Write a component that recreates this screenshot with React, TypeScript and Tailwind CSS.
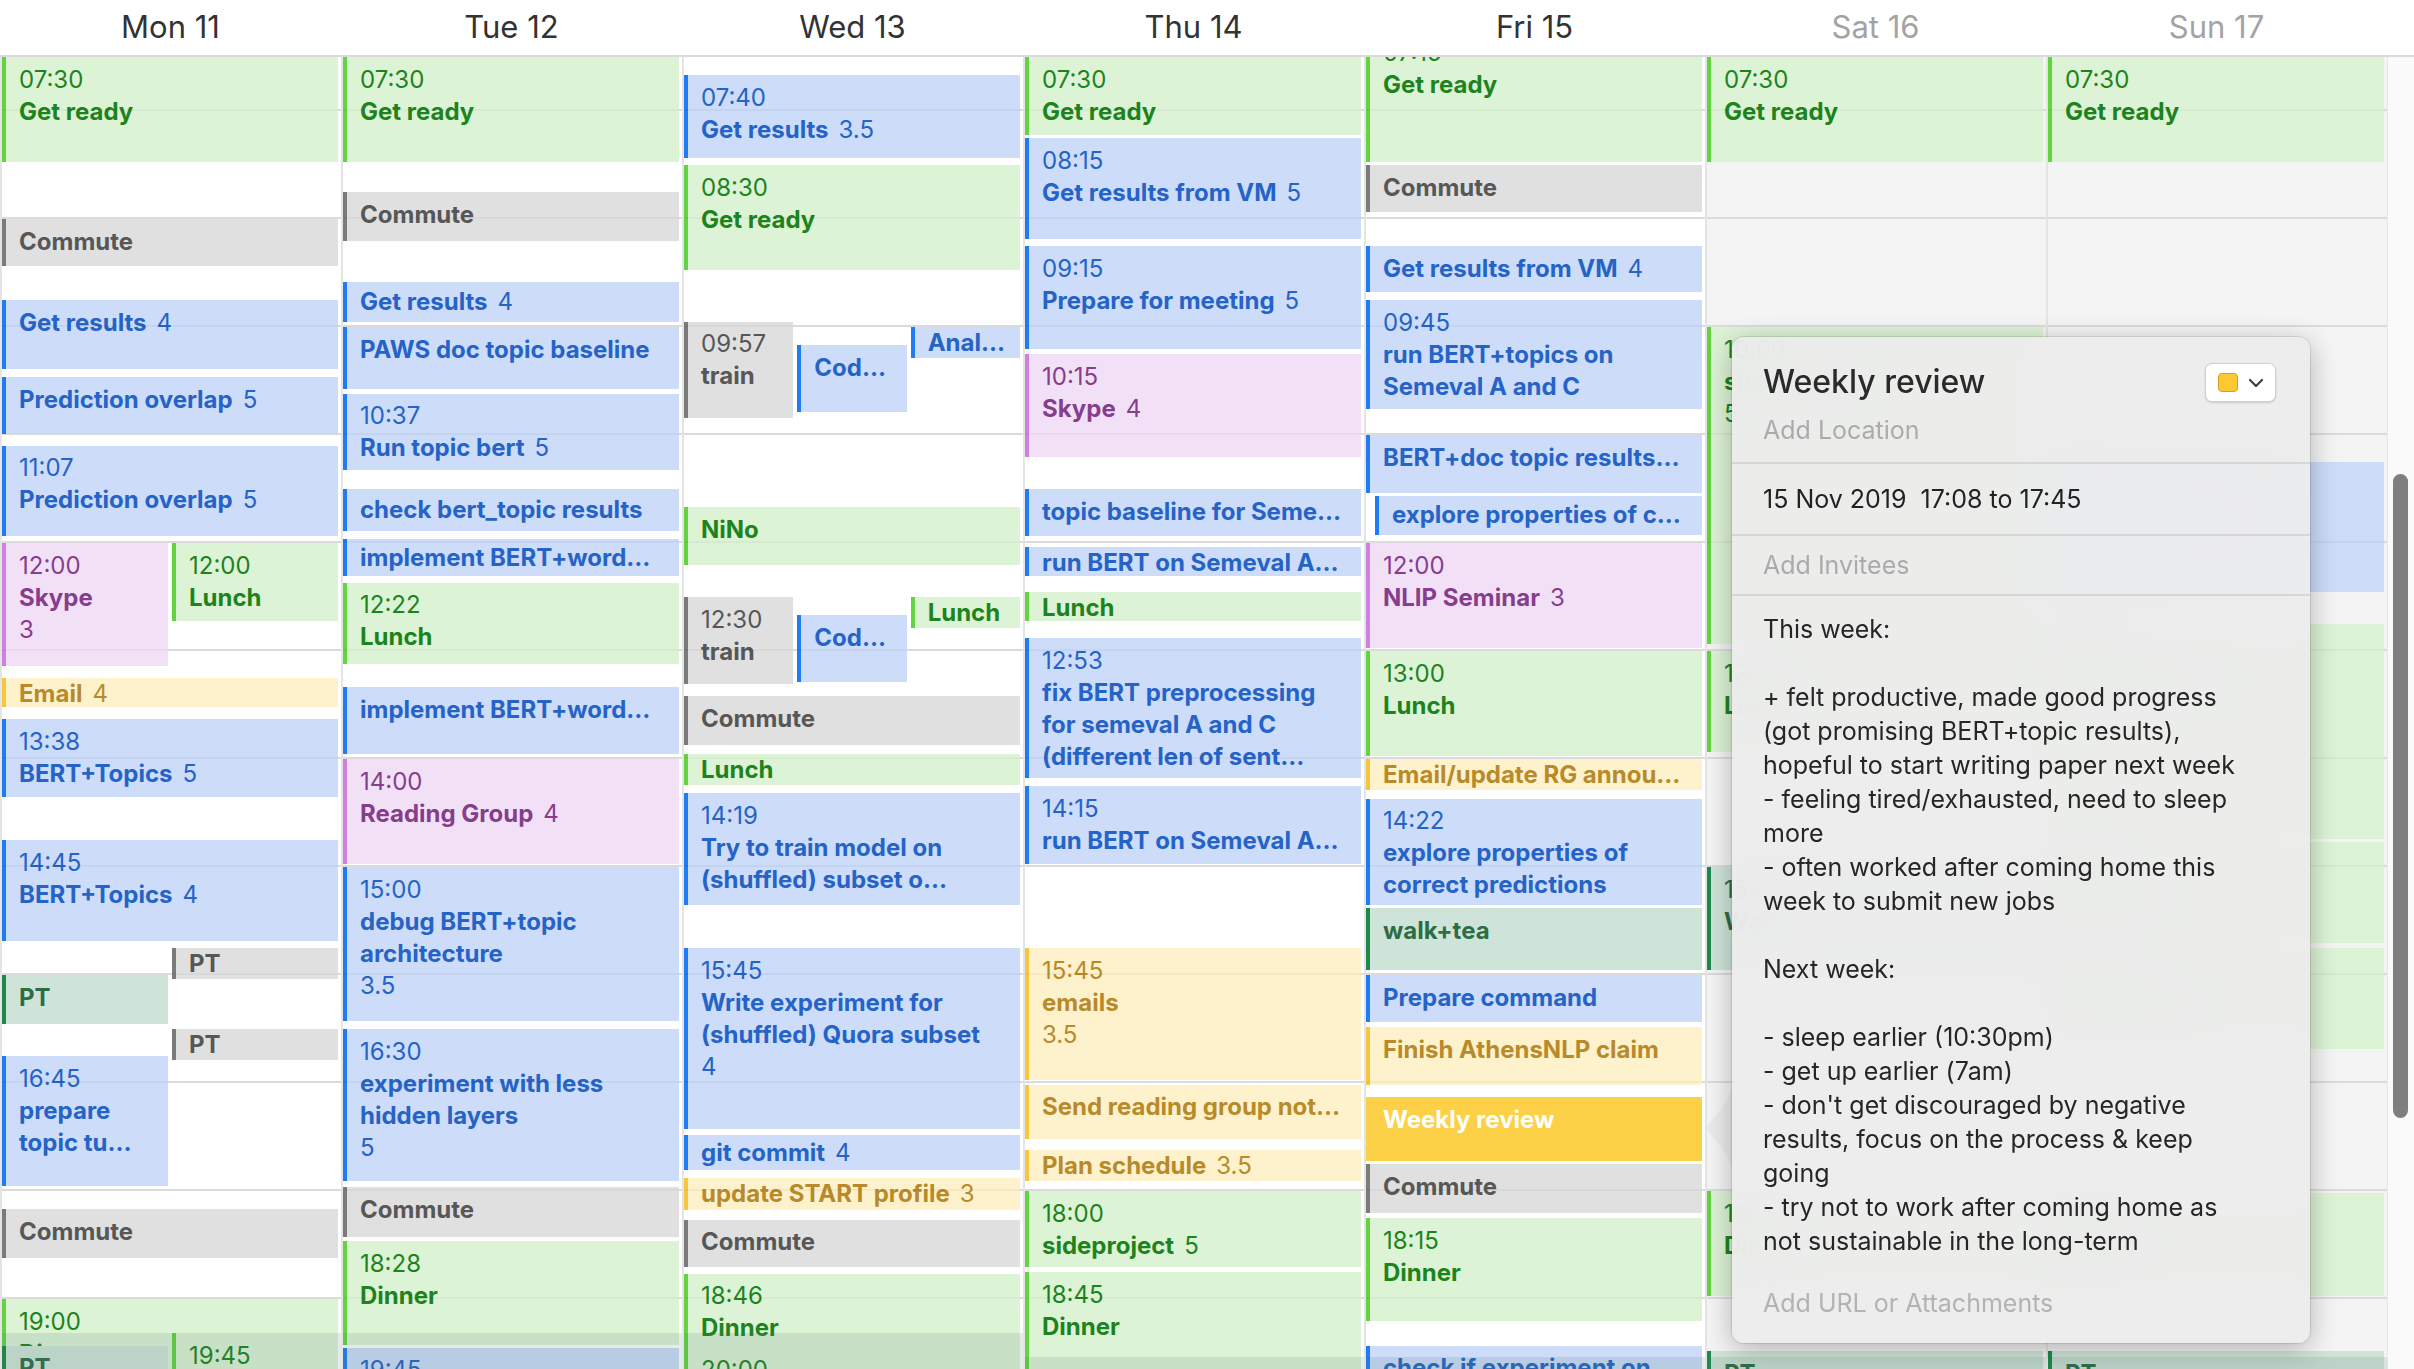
import { ChevronDown } from "lucide-react";

type Kind = "green" | "blue" | "gray" | "purple" | "yellow" | "teal" | "selected";

const kinds: Record<Kind, string> = {
  green: "bg-[#ddf3d6] border-[#62d43f] text-[#1d841d]",
  blue: "bg-[#ccdcf9] border-[#1f7cf5] text-[#2563c7]",
  gray: "bg-[#e0e0e0] border-[#7b7b7b] text-[#575757]",
  purple: "bg-[#f2e1f6] border-[#cf80e0] text-[#863d8d]",
  yellow: "bg-[#fdf2cc] border-[#f8c63c] text-[#b98a2a]",
  teal: "bg-[#cfe4d8] border-[#1b8a4b] text-[#2d6d46]",
  selected: "bg-[#fdd147] border-[#fdd147] text-white",
};

type Ev = {
  s: string;
  e: string;
  k: Kind;
  time?: string;
  lines: string[];
  num?: string;
  numLine?: boolean;
  part?: [number, number];
  indent?: number;
};

type Day = { label: string; weekend?: boolean; band: number; events: Ev[] };

const days: Day[] = [
  {
    label: "Mon 11",
    band: 1276,
    events: [
      { s: "07:30", e: "08:30", k: "green", time: "07:30", lines: ["Get ready"] },
      { s: "09:00", e: "09:28", k: "gray", lines: ["Commute"] },
      { s: "09:45", e: "10:25", k: "blue", lines: ["Get results"], num: "4" },
      { s: "10:28", e: "11:01", k: "blue", lines: ["Prediction overlap"], num: "5" },
      { s: "11:06", e: "11:58", k: "blue", time: "11:07", lines: ["Prediction overlap"], num: "5" },
      { s: "12:00", e: "13:10", k: "purple", time: "12:00", lines: ["Skype"], num: "3", numLine: true, part: [0, 2] },
      { s: "12:00", e: "12:45", k: "green", time: "12:00", lines: ["Lunch"], part: [1, 2] },
      { s: "13:15", e: "13:33", k: "yellow", lines: ["Email"], num: "4" },
      { s: "13:38", e: "14:23", k: "blue", time: "13:38", lines: ["BERT+Topics"], num: "5" },
      { s: "14:45", e: "15:43", k: "blue", time: "14:45", lines: ["BERT+Topics"], num: "4" },
      { s: "15:45", e: "16:04", k: "gray", lines: ["PT"], part: [1, 2] },
      { s: "16:00", e: "16:29", k: "teal", lines: ["PT"], part: [0, 2] },
      { s: "16:30", e: "16:49", k: "gray", lines: ["PT"], part: [1, 2] },
      { s: "16:45", e: "17:59", k: "blue", time: "16:45", lines: ["prepare", "topic tu…"], part: [0, 2] },
      { s: "18:10", e: "18:39", k: "gray", lines: ["Commute"] },
      { s: "19:00", e: "20:30", k: "green", time: "19:00", lines: ["Dinner"] },
      { s: "19:19", e: "20:30", k: "green", time: "19:45", lines: ["Dinner"], part: [1, 2] },
      { s: "19:26", e: "20:30", k: "teal", lines: ["PT"], part: [0, 2] },
    ],
  },
  {
    label: "Tue 12",
    band: 1276,
    events: [
      { s: "07:30", e: "08:30", k: "green", time: "07:30", lines: ["Get ready"] },
      { s: "08:45", e: "09:14", k: "gray", lines: ["Commute"] },
      { s: "09:35", e: "09:59", k: "blue", lines: ["Get results"], num: "4" },
      { s: "10:00", e: "10:36", k: "blue", lines: ["PAWS doc topic baseline"] },
      { s: "10:37", e: "11:21", k: "blue", time: "10:37", lines: ["Run topic bert"], num: "5" },
      { s: "11:30", e: "11:55", k: "blue", lines: ["check bert_topic results"] },
      { s: "11:58", e: "12:20", k: "blue", lines: ["implement BERT+word…"] },
      { s: "12:22", e: "13:09", k: "green", time: "12:22", lines: ["Lunch"] },
      { s: "13:20", e: "13:59", k: "blue", lines: ["implement BERT+word…"] },
      { s: "14:00", e: "15:00", k: "purple", time: "14:00", lines: ["Reading Group"], num: "4" },
      { s: "15:00", e: "16:27", k: "blue", time: "15:00", lines: ["debug BERT+topic", "architecture"], num: "3.5", numLine: true },
      { s: "16:30", e: "17:56", k: "blue", time: "16:30", lines: ["experiment with less", "hidden layers"], num: "5", numLine: true },
      { s: "17:58", e: "18:27", k: "gray", lines: ["Commute"] },
      { s: "18:28", e: "19:27", k: "green", time: "18:28", lines: ["Dinner"] },
      { s: "19:27", e: "20:30", k: "blue", time: "19:45", lines: ["Get results from VM"], num: "4" },
    ],
  },
  {
    label: "Wed 13",
    band: 1276,
    events: [
      { s: "07:40", e: "08:28", k: "blue", time: "07:40", lines: ["Get results"], num: "3.5" },
      { s: "08:30", e: "09:30", k: "green", time: "08:30", lines: ["Get ready"] },
      { s: "09:57", e: "10:52", k: "gray", time: "09:57", lines: ["train"], part: [0, 3] },
      { s: "10:10", e: "10:49", k: "blue", lines: ["Cod…"], part: [1, 3] },
      { s: "10:00", e: "10:19", k: "blue", lines: ["Anal…"], part: [2, 3] },
      { s: "11:40", e: "12:14", k: "green", lines: ["NiNo"] },
      { s: "12:30", e: "13:20", k: "gray", time: "12:30", lines: ["train"], part: [0, 3] },
      { s: "12:40", e: "13:19", k: "blue", lines: ["Cod…"], part: [1, 3] },
      { s: "12:30", e: "12:49", k: "green", lines: ["Lunch"], part: [2, 3] },
      { s: "13:25", e: "13:54", k: "gray", lines: ["Commute"] },
      { s: "13:57", e: "14:16", k: "green", lines: ["Lunch"] },
      { s: "14:19", e: "15:23", k: "blue", time: "14:19", lines: ["Try to train model on", "(shuffled) subset o…"] },
      { s: "15:45", e: "17:27", k: "blue", time: "15:45", lines: ["Write experiment for", "(shuffled) Quora subset"], num: "4", numLine: true },
      { s: "17:29", e: "17:50", k: "blue", lines: ["git commit"], num: "4" },
      { s: "17:53", e: "18:12", k: "yellow", lines: ["update START profile"], num: "3" },
      { s: "18:16", e: "18:44", k: "gray", lines: ["Commute"] },
      { s: "18:46", e: "20:30", k: "green", time: "18:46", lines: ["Dinner"] },
      { s: "19:27", e: "20:30", k: "green", time: "20:00", lines: ["Dinner"] },
    ],
  },
  {
    label: "Thu 14",
    band: 1300,
    events: [
      { s: "07:30", e: "08:15", k: "green", time: "07:30", lines: ["Get ready"] },
      { s: "08:15", e: "09:13", k: "blue", time: "08:15", lines: ["Get results from VM"], num: "5" },
      { s: "09:15", e: "10:14", k: "blue", time: "09:15", lines: ["Prepare for meeting"], num: "5" },
      { s: "10:15", e: "11:14", k: "purple", time: "10:15", lines: ["Skype"], num: "4" },
      { s: "11:30", e: "11:58", k: "blue", lines: ["topic baseline for Seme…"] },
      { s: "12:02", e: "12:20", k: "blue", lines: ["run BERT on Semeval A…"] },
      { s: "12:27", e: "12:45", k: "green", lines: ["Lunch"] },
      { s: "12:53", e: "14:12", k: "blue", time: "12:53", lines: ["fix BERT preprocessing", "for semeval A and C", "(different len of sent…"] },
      { s: "14:15", e: "15:00", k: "blue", time: "14:15", lines: ["run BERT on Semeval A…"] },
      { s: "15:45", e: "17:00", k: "yellow", time: "15:45", lines: ["emails"], num: "3.5", numLine: true },
      { s: "17:01", e: "17:33", k: "yellow", lines: ["Send reading group not…"] },
      { s: "17:37", e: "17:56", k: "yellow", lines: ["Plan schedule"], num: "3.5" },
      { s: "18:00", e: "18:44", k: "green", time: "18:00", lines: ["sideproject"], num: "5" },
      { s: "18:45", e: "20:30", k: "green", time: "18:45", lines: ["Dinner"] },
    ],
  },
  {
    label: "Fri 15",
    band: 1300,
    events: [
      { s: "07:15", e: "08:30", k: "green", time: "07:15", lines: ["Get ready"] },
      { s: "08:30", e: "08:58", k: "gray", lines: ["Commute"] },
      { s: "09:15", e: "09:42", k: "blue", lines: ["Get results from VM"], num: "4" },
      { s: "09:45", e: "10:47", k: "blue", time: "09:45", lines: ["run BERT+topics on", "Semeval A and C"] },
      { s: "11:00", e: "11:34", k: "blue", lines: ["BERT+doc topic results…"] },
      { s: "11:34", e: "11:57", k: "blue", lines: ["explore properties of c…"], indent: 9 },
      { s: "12:00", e: "13:00", k: "purple", time: "12:00", lines: ["NLIP Seminar"], num: "3" },
      { s: "13:00", e: "14:00", k: "green", time: "13:00", lines: ["Lunch"] },
      { s: "14:00", e: "14:19", k: "yellow", lines: ["Email/update RG annou…"] },
      { s: "14:22", e: "15:23", k: "blue", time: "14:22", lines: ["explore properties of", "correct predictions"] },
      { s: "15:23", e: "15:59", k: "teal", lines: ["walk+tea"] },
      { s: "16:00", e: "16:28", k: "blue", lines: ["Prepare command"] },
      { s: "16:29", e: "17:03", k: "yellow", lines: ["Finish AthensNLP claim"] },
      { s: "17:08", e: "17:45", k: "selected", lines: ["Weekly review"] },
      { s: "17:45", e: "18:14", k: "gray", lines: ["Commute"] },
      { s: "18:15", e: "19:14", k: "green", time: "18:15", lines: ["Dinner"] },
      { s: "19:26", e: "20:30", k: "blue", lines: ["check if experiment on…"] },
    ],
  },
  {
    label: "Sat 16",
    weekend: true,
    band: 1300,
    events: [
      { s: "07:30", e: "08:30", k: "green", time: "07:30", lines: ["Get ready"] },
      { s: "10:00", e: "12:58", k: "green", time: "10:00", lines: ["sideproject"], num: "5", numLine: true },
      { s: "13:00", e: "13:58", k: "green", time: "13:00", lines: ["Lunch"] },
      { s: "15:00", e: "15:59", k: "teal", time: "15:00", lines: ["Walk"] },
      { s: "18:00", e: "19:00", k: "green", time: "18:00", lines: ["Dinner"] },
      { s: "19:29", e: "20:30", k: "teal", lines: ["PT"] },
    ],
  },
  {
    label: "Sun 17",
    weekend: true,
    band: 1300,
    events: [
      { s: "07:30", e: "08:30", k: "green", time: "07:30", lines: ["Get ready"] },
      { s: "11:15", e: "12:29", k: "blue", time: "11:15", lines: ["Get results"], num: "4" },
      { s: "12:45", e: "14:46", k: "green", time: "12:45", lines: ["sideproject"], num: "5" },
      { s: "14:46", e: "15:44", k: "green", time: "14:46", lines: ["Reading"] },
      { s: "15:45", e: "16:43", k: "green", time: "15:45", lines: ["sideproject"] },
      { s: "18:01", e: "19:00", k: "green", time: "18:00", lines: ["Dinner"] },
      { s: "19:29", e: "20:30", k: "teal", lines: ["PT"] },
    ],
  },
];

const hours = [8, 9, 10, 11, 12, 13, 14, 15, 16, 17, 18, 19];

const toMin = (t: string) => {
  const [h, m] = t.split(":").map(Number);
  return h * 60 + m;
};

// events sit on a time canvas: top/height come from the start and end times
function EventBox({ ev }: { ev: Ev }) {
  const top = (toMin(ev.s) - 450) * 1.8;
  const height = (toMin(ev.e) - toMin(ev.s)) * 1.8 - 3;
  const pt = Math.max(0, Math.min(6.5, (height - 32) / 2));
  const [idx, cnt] = ev.part ?? [0, 1];
  const slot = 340 / cnt;
  const indent = ev.indent ?? 0;
  const last = ev.lines.length - 1;

  return (
    <div
      className={`absolute overflow-hidden border-l-4 pl-[13px] pr-1 ${kinds[ev.k]}`}
      style={{ top, height, left: idx * slot + indent, width: slot - 4 - indent, paddingTop: pt }}
    >
      {ev.time && <div className="whitespace-nowrap">{ev.time}</div>}
      {ev.lines.map((l, i) => (
        <div key={i} className="whitespace-nowrap font-bold">
          {l}
          {ev.num && !ev.numLine && i === last && <span className="ml-[10px] font-normal">{ev.num}</span>}
        </div>
      ))}
      {ev.num && ev.numLine && <div>{ev.num}</div>}
    </div>
  );
}

function DayColumn({ day }: { day: Day }) {
  return (
    <div
      className={`relative h-full w-[341px] shrink-0 overflow-hidden border-l-2 border-[#e4e4e4] ${
        day.weekend ? "bg-[#f4f4f4]" : "bg-white"
      }`}
    >
      {hours.map((h) => (
        <div key={h} className="absolute left-0 right-0 h-[2px] bg-[#e4e4e4]" style={{ top: (h * 60 - 450) * 1.8 - 2 }} />
      ))}
      {day.events.map((ev, i) => (
        <EventBox key={i} ev={ev} />
      ))}
      {hours.map((h) => (
        <div key={`o${h}`} className="absolute left-0 right-0 h-[2px] bg-black/[0.035]" style={{ top: (h * 60 - 450) * 1.8 - 2 }} />
      ))}
      <div className="absolute bottom-0 left-0 right-0 bg-[#4a7a6a]/15" style={{ top: day.band }} />
    </div>
  );
}

const notes = [
  "This week:",
  "",
  "+ felt productive, made good progress",
  "(got promising BERT+topic results),",
  "hopeful to start writing paper next week",
  "- feeling tired/exhausted, need to sleep",
  "more",
  "- often worked after coming home this",
  "week to submit new jobs",
  "",
  "Next week:",
  "",
  "- sleep earlier (10:30pm)",
  "- get up earlier (7am)",
  "- don't get discouraged by negative",
  "results, focus on the process & keep",
  "going",
  "- try not to work after coming home as",
  "not sustainable in the long-term",
];

function Popover() {
  return (
    <div className="absolute left-[1732px] top-[337px] h-[1006px] w-[578px]">
      <svg className="absolute left-[-25px] top-[740px]" width="26" height="102" viewBox="0 0 26 102">
        <path d="M26 0 C26 28 0 44 0 51 C0 58 26 74 26 102 Z" fill="#ebebeb" />
      </svg>
      <div className="flex h-full w-full flex-col overflow-hidden rounded-[12px] bg-[#ececec]/[0.95] text-[#262626] shadow-[0_6px_28px_rgba(0,0,0,0.28)] ring-1 ring-black/10 backdrop-blur-xl">
        <div className="flex items-start justify-between pb-[15px] pl-[31px] pr-[34px] pt-[25px]">
          <div>
            <div className="text-[32px] font-medium leading-[40px] text-[#2a2a2a]">Weekly review</div>
            <div className="mt-[11px] text-[25px] leading-[34px] text-[#ababab]">Add Location</div>
          </div>
          <div className="mt-[1px] flex h-[39px] w-[71px] items-center justify-center gap-[6px] rounded-[7px] border border-[#cfcfcf] bg-white pl-[4px] shadow-[0_1px_2px_rgba(0,0,0,0.15)]">
            <div className="h-[19px] w-[20px] rounded-[4px] border border-[#d2a21c] bg-[#fcc932]" />
            <ChevronDown size={24} strokeWidth={2.2} color="#3f3f3f" />
          </div>
        </div>
        <div className="h-[2px] bg-[#d6d6d6]" />
        <div className="flex h-[70px] items-center whitespace-pre px-[31px] text-[25px] text-[#222]">15 Nov 2019  17:08 to 17:45</div>
        <div className="h-[2px] bg-[#d6d6d6]" />
        <div className="flex h-[58px] items-center px-[31px] text-[25px] text-[#ababab]">Add Invitees</div>
        <div className="h-[2px] bg-[#d6d6d6]" />
        <div className="px-[31px] pt-[16px] text-[25px] leading-[34px] text-[#262626]">
          {notes.map((l, i) => (
            <div key={i} className="h-[34px] whitespace-nowrap">
              {l}
            </div>
          ))}
        </div>
        <div className="mt-[28px] px-[31px] text-[25px] leading-[34px] text-[#b3b3b3]">Add URL or Attachments</div>
      </div>
    </div>
  );
}

export default function App() {
  return (
    <div className="relative h-[1369px] w-[2414px] overflow-hidden bg-white font-['Inter',sans-serif] text-[24px] leading-[32px]">
      {/* Day headers */}
      <div className="flex h-[57px] border-b-2 border-[#dadada] bg-white pb-[3px]">
        {days.map((d) => (
          <div
            key={d.label}
            className={`flex w-[341px] shrink-0 items-center justify-center text-[31px] leading-none ${
              d.weekend ? "text-[#a3a3a3]" : "text-[#333]"
            }`}
          >
            {d.label}
          </div>
        ))}
      </div>

      {/* Week grid */}
      <div className="flex h-[1312px]">
        {days.map((d) => (
          <DayColumn key={d.label} day={d} />
        ))}
        <div className="relative h-full w-[27px] shrink-0 border-l border-[#e6e6e6] bg-[#fafafa]">
          <div className="absolute left-[5px] top-[417px] h-[644px] w-[15px] rounded-full bg-[#7f7f7f]" />
        </div>
      </div>

      <Popover />
    </div>
  );
}
